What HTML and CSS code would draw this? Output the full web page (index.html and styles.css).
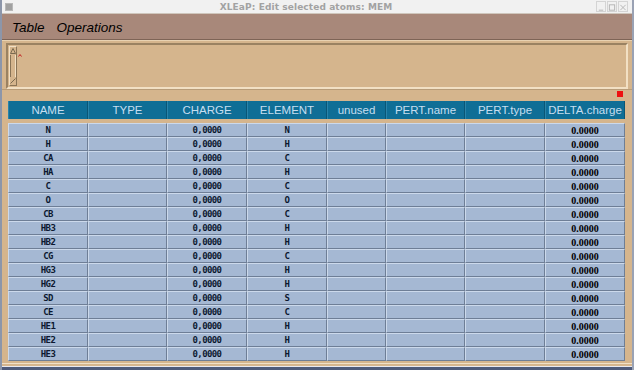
FILE: index.html
```html
<!DOCTYPE html>
<html>
<head>
<meta charset="utf-8">
<link rel="stylesheet" href="styles.css">
</head>
<body>
<div class="window">
  <div class="titlebar">
    <div class="ticon">
      <svg width="10" height="10" viewBox="0 0 10 10"><rect x="1" y="1" width="8" height="8" fill="#b8b8b8"/><path d="M2 3h6M2 5h6M2 7h6" stroke="#8a8a8a" stroke-width="1"/></svg>
    </div>
    <div class="ttext">XLEaP: Edit selected atoms: MEM</div>
    <div class="tbtns">
      <span class="tbtn"><svg width="9" height="11" viewBox="0 0 9 11"><path d="M2 8.5h5" stroke="#b0b0b0"/></svg></span>
      <span class="tbtn"><svg width="9" height="11" viewBox="0 0 9 11"><rect x="1.5" y="2.5" width="6" height="6" fill="none" stroke="#b0b0b0"/></svg></span>
      <span class="tbtn"><svg width="9" height="11" viewBox="0 0 9 11"><path d="M1.5 2.5l6 6M7.5 2.5l-6 6" stroke="#b0b0b0"/></svg></span>
    </div>
  </div>
  <div class="menubar">
    <span class="menu">Table</span>
    <span class="menu">Operations</span>
  </div>
  <div class="textwrap">
    <div class="textarea">
      <div class="scroll">
        <svg class="arr" width="6" height="6" viewBox="0 0 6 6"><path d="M0.5 5.5L3 0.5L5.5 5.5Z" fill="none" stroke="#7a6a50"/></svg>
        <div class="track"></div>
        <svg class="arr" width="6" height="6" viewBox="0 0 6 6"><path d="M5.5 0.5L0.5 5.5" fill="none" stroke="#7a6a50"/></svg>
      </div>
      <svg class="caret" width="4" height="3" viewBox="0 0 4 3"><path d="M0.5 2.5L2 0.5L3.5 2.5" fill="none" stroke="#c02020"/></svg>
    </div>
  </div>
  <div class="panel">
    <div class="flagrow"><span class="flag"></span></div>
    <div class="grid head">
      <div class="h">NAME</div>
      <div class="h">TYPE</div>
      <div class="h">CHARGE</div>
      <div class="h">ELEMENT</div>
      <div class="h">unused</div>
      <div class="h">PERT.name</div>
      <div class="h">PERT.type</div>
      <div class="h">DELTA.charge</div>
    </div>
    <div class="rows" id="rows"></div>
  </div>
  <div class="bottom"></div>
</div>
<script>
var data=[["N","N"],["H","H"],["CA","C"],["HA","H"],["C","C"],["O","O"],["CB","C"],["HB3","H"],["HB2","H"],["CG","C"],["HG3","H"],["HG2","H"],["SD","S"],["CE","C"],["HE1","H"],["HE2","H"],["HE3","H"]];
var r=document.getElementById("rows");
data.forEach(function(d){
  var row=document.createElement("div");row.className="grid row";
  var cells=[d[0],"","0,0000",d[1],"","","","0.0000"];
  cells.forEach(function(t,i){var c=document.createElement("div");c.className="c"+(i==7?" delta":"");c.textContent=t;row.appendChild(c);});
  r.appendChild(row);
});
</script>
</body>
</html>
```

FILE: styles.css
```css
html,body{margin:0;padding:0;}
body{width:634px;height:370px;overflow:hidden;background:#d5b58d;}
.window{width:634px;height:370px;display:flex;flex-direction:column;box-sizing:border-box;border-left:2px solid #8c96aa;border-right:2px solid #9aa2b4;}
.titlebar{height:13px;background:#f1f1f1;display:flex;align-items:center;border-bottom:1px solid #cfc6bc;}
.ticon{width:14px;display:flex;justify-content:center;}
.ttext{flex:1;text-align:center;font:bold 9px "DejaVu Sans",sans-serif;color:#a2a2a2;letter-spacing:0.1px;}
.tbtns{display:flex;gap:1px;padding-right:2px;width:34px;}
.tbtn{width:10px;height:11px;border:1px solid #d4d4d4;box-sizing:border-box;display:flex;}
.menubar{height:25px;background:#a8887a;display:flex;align-items:center;gap:12px;padding-left:10px;border-bottom:1px solid #7e6456;}
.menu{font:italic 13.5px "Liberation Sans",Arial,sans-serif;color:#000;position:relative;top:1px;}
.textwrap{padding:2px 4px 0 4px;border-top:1px solid #e8d2b2;}
.textarea{height:46px;box-sizing:border-box;border:2px solid;border-color:#9a8262 #f2e0c4 #f2e0c4 #9a8262;background:#d5b58d;display:flex;padding:1px 1px 1px 1px;}
.scroll{width:8px;box-sizing:border-box;border:1px solid;border-color:#f2e0c4 #8a7456 #8a7456 #f2e0c4;display:flex;flex-direction:column;align-items:center;}
.arr{margin:1px 0;}
.track{flex:1;width:4px;border-left:1px solid #8a7456;border-right:1px solid #f2e0c4;}
.caret{margin:8px 0 0 1px;}
.panel{flex:1;display:flex;flex-direction:column;padding:0 7px 0 6px;border-top:1px solid #b89c78;}
.flagrow{height:11px;display:flex;justify-content:flex-end;padding-top:1px;box-sizing:border-box;padding-right:2px;}
.flag{width:6px;height:6px;background:#ee1010;}
.grid{display:grid;grid-template-columns:80px 79px 80px 80px 59px 79px 80px 80px;}
.head{height:18px;background:#0f6e96;}
.h{display:flex;align-items:center;justify-content:center;font:11.5px "Liberation Sans",Arial,sans-serif;color:#c6def0;border-left:1px solid #2a84aa;border-right:1px solid #0a5676;box-sizing:border-box;}
.rows{margin-top:4px;display:flex;flex-direction:column;}
.row{height:14px;}
.c{box-sizing:border-box;border:1px solid;border-color:#ccd9eb #6e7e96 #6e7e96 #ccd9eb;background:#a5b8d3;display:flex;align-items:center;justify-content:center;font:bold 9px "DejaVu Sans Mono",monospace;letter-spacing:-0.6px;color:#0c1830;line-height:1;}
.c.delta{font:bold 10px "Liberation Serif","Times New Roman",serif;letter-spacing:0;color:#000;}
.bottom{height:6px;border-top:1px solid #f0e0c8;background:#d5b58d;box-shadow:inset 0 -3px 0 #4e5a7a,inset 0 -4px 0 #e8e8ee;}
```
